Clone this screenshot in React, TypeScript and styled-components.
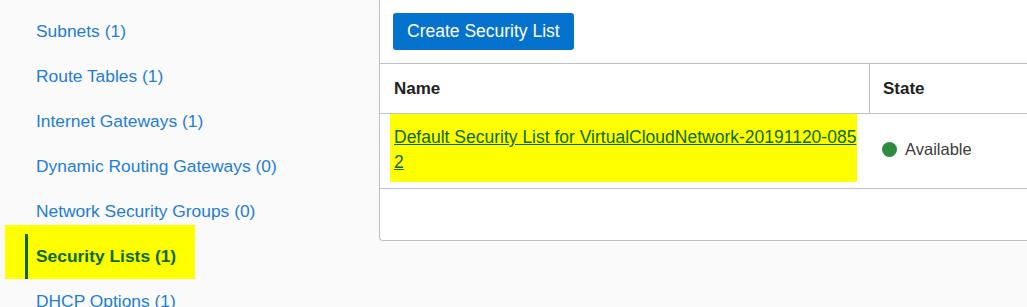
import type { FC } from "react";
import styled, { createGlobalStyle } from "styled-components";

const GlobalStyle = createGlobalStyle`
  body {
    margin: 0;
    background: #fafafa;
    font-family: "Liberation Sans", Arial, sans-serif;
  }
  * {
    box-sizing: border-box;
  }
`;

const Page = styled.div`
  display: flex;
  align-items: flex-start;
  height: 307px;
  overflow: hidden;
`;

const Sidebar = styled.nav`
  width: 379px;
  flex-shrink: 0;
  padding-top: 9px;
`;

const NavList = styled.ul`
  list-style: none;
  margin: 0;
  padding: 0 0 0 25px;
`;

const NavItem = styled.li<{ $marked?: boolean }>`
  display: flex;
  height: 45px;

  ${(props) =>
    props.$marked &&
    `
    width: 190px;
    height: 54px;
    margin: -9px 0 0 -20px;
    padding: 9px 0 0 20px;
    background: #ffff00;
  `}
`;

const NavLink = styled.a<{ $active?: boolean }>`
  display: flex;
  align-items: center;
  height: 45px;
  padding-left: 8px;
  border-left: 3px solid ${(props) => (props.$active ? "#0a6a0a" : "transparent")};
  font-size: 17.4px;
  font-weight: ${(props) => (props.$active ? "bold" : "normal")};
  color: ${(props) => (props.$active ? "#0a6a0a" : "#1f7dd4")};
  text-decoration: none;
  cursor: pointer;
`;

const Panel = styled.section`
  flex: 1;
  height: 241px;
  background: #fff;
  border: 1px solid #bcc0c8;
  border-top: none;
  border-right: none;
  border-bottom-left-radius: 4px;
`;

const Toolbar = styled.div`
  display: flex;
  padding: 13px;
`;

const PrimaryButton = styled.button`
  height: 37px;
  padding: 0 14px;
  border: none;
  border-radius: 3px;
  background: #0572ce;
  color: #fff;
  font-family: inherit;
  font-size: 17.5px;
  cursor: pointer;
`;

const Table = styled.div`
  border-top: 1px solid #bcc0c8;
`;

const Row = styled.div<{ $head?: boolean }>`
  display: grid;
  grid-template-columns: 489px 1fr;
  border-bottom: 1px solid #bcc0c8;
  min-height: ${(props) => (props.$head ? "50px" : "75px")};
`;

const HeadCell = styled.div<{ $divider?: boolean }>`
  display: flex;
  align-items: center;
  padding: 0 14px 0 ${(props) => (props.$divider ? "13px" : "14px")};
  border-left: ${(props) => (props.$divider ? "1px solid #bcc0c8" : "none")};
  font-size: 17px;
  font-weight: bold;
  color: #222;
`;

const NameCell = styled.div`
  padding: 0 12px 6px 10px;
`;

const Marked = styled.div`
  padding: 11px 0 7px 4px;
  background: #ffff00;
`;

const ResourceLink = styled.a`
  font-size: 17.5px;
  line-height: 25px;
  color: #0a6a0a;
  text-decoration: underline;
  word-break: break-all;
  cursor: pointer;
`;

const StateCell = styled.div`
  display: flex;
  align-items: center;
  gap: 8px;
  padding: 0 0 3px 13px;
  font-size: 16.5px;
  color: #3c3c3c;
`;

const StatusDot = styled.span<{ $color: string }>`
  width: 15px;
  height: 15px;
  border-radius: 50%;
  background: ${(props) => props.$color};
`;

type NavEntry = { label: string; count: number; active?: boolean };

const resources: NavEntry[] = [
  { label: "Subnets", count: 1 },
  { label: "Route Tables", count: 1 },
  { label: "Internet Gateways", count: 1 },
  { label: "Dynamic Routing Gateways", count: 0 },
  { label: "Network Security Groups", count: 0 },
  { label: "Security Lists", count: 1, active: true },
  { label: "DHCP Options", count: 1 },
];

const App: FC = () => {
  return (
    <Page>
      <GlobalStyle />
      <Sidebar>
        <NavList>
          {resources.map((entry) => (
            <NavItem key={entry.label} $marked={entry.active}>
              <NavLink $active={entry.active}>
                {entry.label} ({entry.count})
              </NavLink>
            </NavItem>
          ))}
        </NavList>
      </Sidebar>
      <Panel>
        <Toolbar>
          <PrimaryButton>Create Security List</PrimaryButton>
        </Toolbar>
        <Table>
          <Row $head>
            <HeadCell>Name</HeadCell>
            <HeadCell $divider>State</HeadCell>
          </Row>
          <Row>
            <NameCell>
              <Marked>
                <ResourceLink>Default Security List for VirtualCloudNetwork-20191120-0852</ResourceLink>
              </Marked>
            </NameCell>
            <StateCell>
              <StatusDot $color="#2d8a3e" />
              Available
            </StateCell>
          </Row>
        </Table>
      </Panel>
    </Page>
  );
};

export default App;
